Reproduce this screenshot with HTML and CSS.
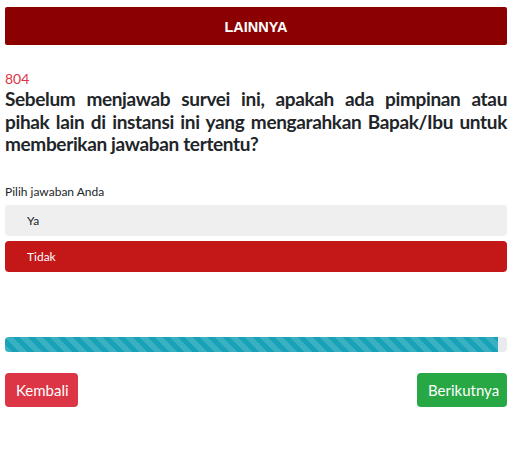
FILE: index.html
```html
<!DOCTYPE html>
<html lang="en">
<head>
  <meta charset="UTF-8">
  <meta name="viewport" content="width=device-width, initial-scale=1.0">
  <title>Survei</title>
  <link rel="stylesheet" href="styles.css">
</head>
<body>
  <div class="survey">
    <div class="section-title">LAINNYA</div>

    <div class="question">
      <div class="question-no">804</div>
      <p class="question-text">Sebelum menjawab survei ini, apakah ada pimpinan atau pihak lain di instansi ini yang mengarahkan Bapak/Ibu untuk memberikan jawaban tertentu?</p>
    </div>

    <div class="answers">
      <div class="answers-label">Pilih jawaban Anda</div>
      <div class="option">Ya</div>
      <div class="option selected">Tidak</div>
    </div>

    <div class="progress">
      <div class="progress-bar" style="width: 98.2%"></div>
    </div>

    <div class="nav">
      <button class="btn btn-back">Kembali</button>
      <button class="btn btn-next">Berikutnya</button>
    </div>
  </div>
</body>
</html>
```

FILE: styles.css
```css
body {
  margin: 0;
  font-family: Lato, "Open Sans", sans-serif;
  color: #212529;
  background-color: #fff;
}

.survey {
  width: 502px;
  padding: 7px 5px;
}

.section-title {
  height: 38px;
  line-height: 40px;
  background-color: #8b0000;
  color: #fff;
  font-family: "Liberation Sans", Arial, sans-serif;
  font-weight: bold;
  font-size: 14.5px;
  text-align: center;
  border-radius: 2px;
}

.question {
  margin-top: 25px;
}

.question-no {
  color: #dc3545;
  font-size: 14px;
  line-height: 18px;
}

.question-text {
  margin: 0;
  font-size: 19px;
  font-weight: bold;
  letter-spacing: -0.35px;
  line-height: 22.5px;
  text-align: justify;
}

.answers {
  margin-top: 28px;
}

.answers-label {
  font-size: 12px;
  line-height: 15px;
  margin-bottom: 6px;
}

.option {
  height: 31px;
  line-height: 31px;
  padding-left: 22px;
  margin-bottom: 5px;
  font-size: 12px;
  background-color: #f0eff0;
  border-radius: 4px;
}

.option.selected {
  background-color: #c41718;
  color: #fff;
}

.progress {
  margin-top: 65px;
  height: 15px;
  background-color: #e9ecef;
  border-radius: 4px;
  overflow: hidden;
}

.progress-bar {
  height: 100%;
  background-color: #17a2b8;
  background-image: linear-gradient(45deg, rgba(255,255,255,.15) 25%, transparent 25%, transparent 50%, rgba(255,255,255,.15) 50%, rgba(255,255,255,.15) 75%, transparent 75%, transparent);
  background-size: 15px 15px;
}

.nav {
  margin-top: 21px;
  display: flex;
  justify-content: space-between;
}

.btn {
  height: 34px;
  padding: 0 11px;
  font-family: Lato, "Open Sans", sans-serif;
  font-size: 15px;
  color: #fff;
  border: none;
  border-radius: 4px;
  cursor: pointer;
}

.btn-back {
  width: 73px;
  background-color: #dc3545;
}

.btn-next {
  width: 90px;
  background-color: #28a745;
}
```
